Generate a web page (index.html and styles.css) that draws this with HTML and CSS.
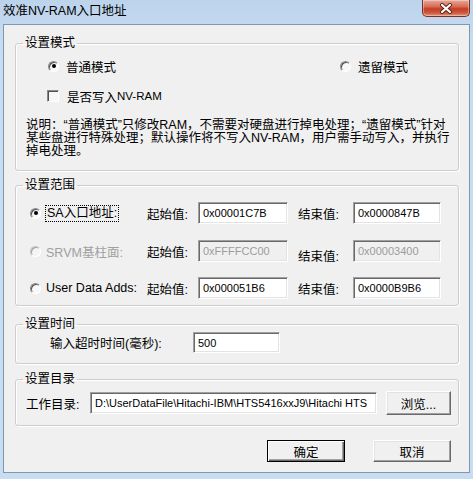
FILE: index.html
```html
<!DOCTYPE html>
<html lang="zh-CN">
<head>
<meta charset="utf-8">
<title>效准NV-RAM入口地址</title>
<link rel="stylesheet" href="styles.css">
</head>
<body>
<div class="window">
  <div class="titlebar">
    <span class="title">效准NV-RAM入口地址</span>
    <div class="close">
      <svg width="14" height="11" viewBox="0 0 14 11">
        <path d="M3 2 L11 9 M11 2 L3 9" stroke="#5b2318" stroke-width="4" stroke-linecap="round" fill="none"/>
        <path d="M3 2 L11 9 M11 2 L3 9" stroke="#ffffff" stroke-width="2.2" stroke-linecap="round" fill="none"/>
      </svg>
    </div>
  </div>
  <div class="client">
    <fieldset class="group g-mode">
      <legend>设置模式</legend>
      <div class="body">
        <div class="mode-row">
          <span class="opt opt-first"><span class="radio checked"></span>普通模式</span>
          <span class="opt"><span class="radio"></span>遗留模式</span>
        </div>
        <div class="check-row"><span class="checkbox"></span>是否写入<span class="latin">NV-RAM</span></div>
        <p class="desc">说明：“普通模式”只修改RAM，不需要对硬盘进行掉电处理；“遗留模式”针对<br>某些盘进行特殊处理；默认操作将不写入NV-RAM，用户需手动写入，并执行<br>掉电处理。</p>
      </div>
    </fieldset>

    <fieldset class="group g-range">
      <legend>设置范围</legend>
      <div class="body">
        <div class="range-row">
          <span class="opt"><span class="radio checked"></span><span class="focus">SA入口地址:</span></span>
          <span class="lbl">起始值:</span>
          <span class="field f-start">0x00001C7B</span>
          <span></span>
          <span class="lbl">结束值:</span>
          <span class="field f-end">0x0000847B</span>
        </div>
        <div class="range-row row2">
          <span class="opt disabled"><span class="radio"></span>SRVM基柱面:</span>
          <span class="lbl">起始值:</span>
          <span class="field f-start off">0xFFFFCC00</span>
          <span></span>
          <span class="lbl low">结束值:</span>
          <span class="field f-end off">0x00003400</span>
        </div>
        <div class="range-row row3">
          <span class="opt"><span class="radio"></span>User Data Adds:</span>
          <span class="lbl">起始值:</span>
          <span class="field f-start">0x000051B6</span>
          <span></span>
          <span class="lbl">结束值:</span>
          <span class="field f-end">0x0000B9B6</span>
        </div>
      </div>
    </fieldset>

    <fieldset class="group g-time">
      <legend>设置时间</legend>
      <div class="body">
        <div class="time-row">
          <span class="time-lbl">输入超时时间(毫秒):</span>
          <span class="field f-time">500</span>
        </div>
      </div>
    </fieldset>

    <fieldset class="group g-dir">
      <legend>设置目录</legend>
      <div class="body">
        <div class="dir-row">
          <span class="dir-lbl">工作目录:</span>
          <span class="field f-dir">D:\UserDataFile\Hitachi-IBM\HTS5416xxJ9\Hitachi HTS</span>
          <span class="btn b-browse">浏览...</span>
        </div>
      </div>
    </fieldset>

    <div class="actions">
      <span class="btn default">确定</span>
      <span class="btn">取消</span>
    </div>
  </div>
</div>
</body>
</html>
```
FILE: styles.css
```css
* { box-sizing: border-box; }
html, body { margin: 0; padding: 0; }
body {
  width: 473px;
  height: 479px;
  overflow: hidden;
  font-family: "Liberation Sans", "Noto Sans CJK SC", sans-serif;
  font-size: 12px;
  color: #000;
  background: #c6dbf1;
}
.window {
  width: 473px;
  height: 479px;
  display: flex;
  flex-direction: column;
  background: linear-gradient(#bcd3ec, #c7dcf2 40px, #c9ddf2);
}
.titlebar {
  height: 24px;
  flex: none;
  display: flex;
  justify-content: space-between;
  align-items: flex-start;
  padding-left: 3px;
}
.title {
  margin-top: 4px;
  line-height: 15px;
  font-size: 12.5px;
  color: #000;
}
.close {
  width: 48px;
  height: 17px;
  margin-right: 3px;
  border: 1px solid #7b3123;
  border-top: none;
  border-radius: 0 0 5px 5px;
  background: linear-gradient(#e8a899, #d86f57 40%, #c33e25 55%, #d0583c 80%, #e1957c);
  box-shadow: inset 0 0 0 1px rgba(255,255,255,0.35);
  display: flex;
  align-items: center;
  justify-content: center;
}
.client {
  flex: 1;
  margin: 0 3px 6px;
  border: 1px solid #8097b2;
  background: #f0f0f0;
  padding: 11px 10px 0 11px;
  display: flex;
  flex-direction: column;
}
.group {
  margin: 0;
  padding: 0;
  min-width: 0;
  border: 1px solid #cdcdcd;
  border-radius: 3px;
  box-shadow: inset 1px 1px 0 #fff, 1px 1px 0 #fff;
}
.group legend {
  margin-left: 7px;
  padding: 0 2px;
  line-height: 14px;
  font-size: 12.5px;
}
.g-mode .body { padding: 8px 0 12px 10px; }
.mode-row {
  height: 16px;
  display: flex;
  align-items: center;
  padding-left: 22px;
  font-size: 12.5px;
}
.opt { display: flex; align-items: center; white-space: nowrap; }
.opt-first { width: 292px; }
.radio {
  width: 11px;
  height: 11px;
  flex: none;
  border-radius: 50%;
  background: #f8f8f8;
  border: 1px solid;
  border-color: #8a8a8a #fff #fff #8a8a8a;
  box-shadow: inset 1px 1px 0 #505050;
  margin-right: 7px;
  display: flex;
  align-items: center;
  justify-content: center;
}
.radio.checked::after {
  content: "";
  width: 4px;
  height: 4px;
  border-radius: 50%;
  background: #000;
}
.check-row {
  margin-top: 14px;
  height: 16px;
  display: flex;
  align-items: center;
  padding-left: 21px;
  font-size: 12.5px;
}
.latin { font-size: 11.5px; }
.checkbox {
  width: 12px;
  height: 12px;
  background: #f6f6f6;
  border: 1px solid;
  border-color: #8a8a8a #fff #fff #8a8a8a;
  box-shadow: inset 1px 1px 0 #505050;
  margin-right: 8px;
}
.desc {
  margin: 15px 0 0;
  line-height: 13px;
  font-size: 12.5px;
  white-space: nowrap;
}
.g-range { margin-top: 7px; }
.g-range .body { padding: 10px 0 6px 14px; }
.range-row {
  height: 22px;
  display: grid;
  grid-template-columns: 117px 51px 90px 10px 55px 88px;
  align-items: center;
  font-size: 12.5px;
}
.range-row .radio { margin-right: 5px; }
.row2 { margin-top: 16px; }
.row3 { margin-top: 15px; }
.focus {
  outline: 1px dotted #000;
  padding: 0 1px;
  line-height: 15px;
}
.disabled { color: #a0a0a0; }
.disabled .radio {
  background: #f4f4f4;
  border-color: #c0c0c0 #fff #fff #c0c0c0;
  box-shadow: inset 1px 1px 0 #a0a0a0;
}
.lbl.low { position: relative; top: 4px; }
.field {
  height: 22px;
  display: block;
  background: #fff;
  border: 1px solid;
  border-color: #a0a0a0 #fff #fff #a0a0a0;
  box-shadow: inset 1px 1px 0 #696969, inset -1px -1px 0 #e3e3e3;
  padding: 2px 3px 0 4px;
  font-size: 11px;
  line-height: 16px;
  white-space: nowrap;
  overflow: hidden;
}
.field.off { background: #f0f0f0; color: #9c9c9c; }
.g-time { margin-top: 11px; }
.g-time .body { padding: 1px 0 10px 34px; }
.time-row { display: flex; align-items: center; font-size: 12.5px; }
.time-lbl { width: 143px; }
.f-time { width: 87px; height: 21px; }
.g-dir { margin-top: 8px; }
.g-dir .body { padding: 5px 0 10px 10px; }
.dir-row { display: flex; align-items: center; height: 24px; font-size: 12.5px; }
.dir-lbl { width: 64px; }
.f-dir { width: 287px; margin-right: 9px; }
.btn {
  height: 22px;
  width: 78px;
  display: flex;
  align-items: center;
  justify-content: center;
  background: #f0f0f0;
  border: 1px solid;
  border-color: #fff #696969 #696969 #fff;
  box-shadow: inset -1px -1px 0 #a0a0a0, inset 1px 1px 0 #e3e3e3;
  font-size: 12.5px;
}
.b-browse { width: 65px; height: 24px; }
.actions {
  margin-top: 14px;
  display: flex;
  justify-content: flex-end;
  gap: 28px;
  padding-right: 8px;
}
.btn.default {
  border-color: #000;
  box-shadow: inset 1px 1px 0 #fff, inset -1px -1px 0 #696969, inset -2px -2px 0 #a0a0a0;
}
```
